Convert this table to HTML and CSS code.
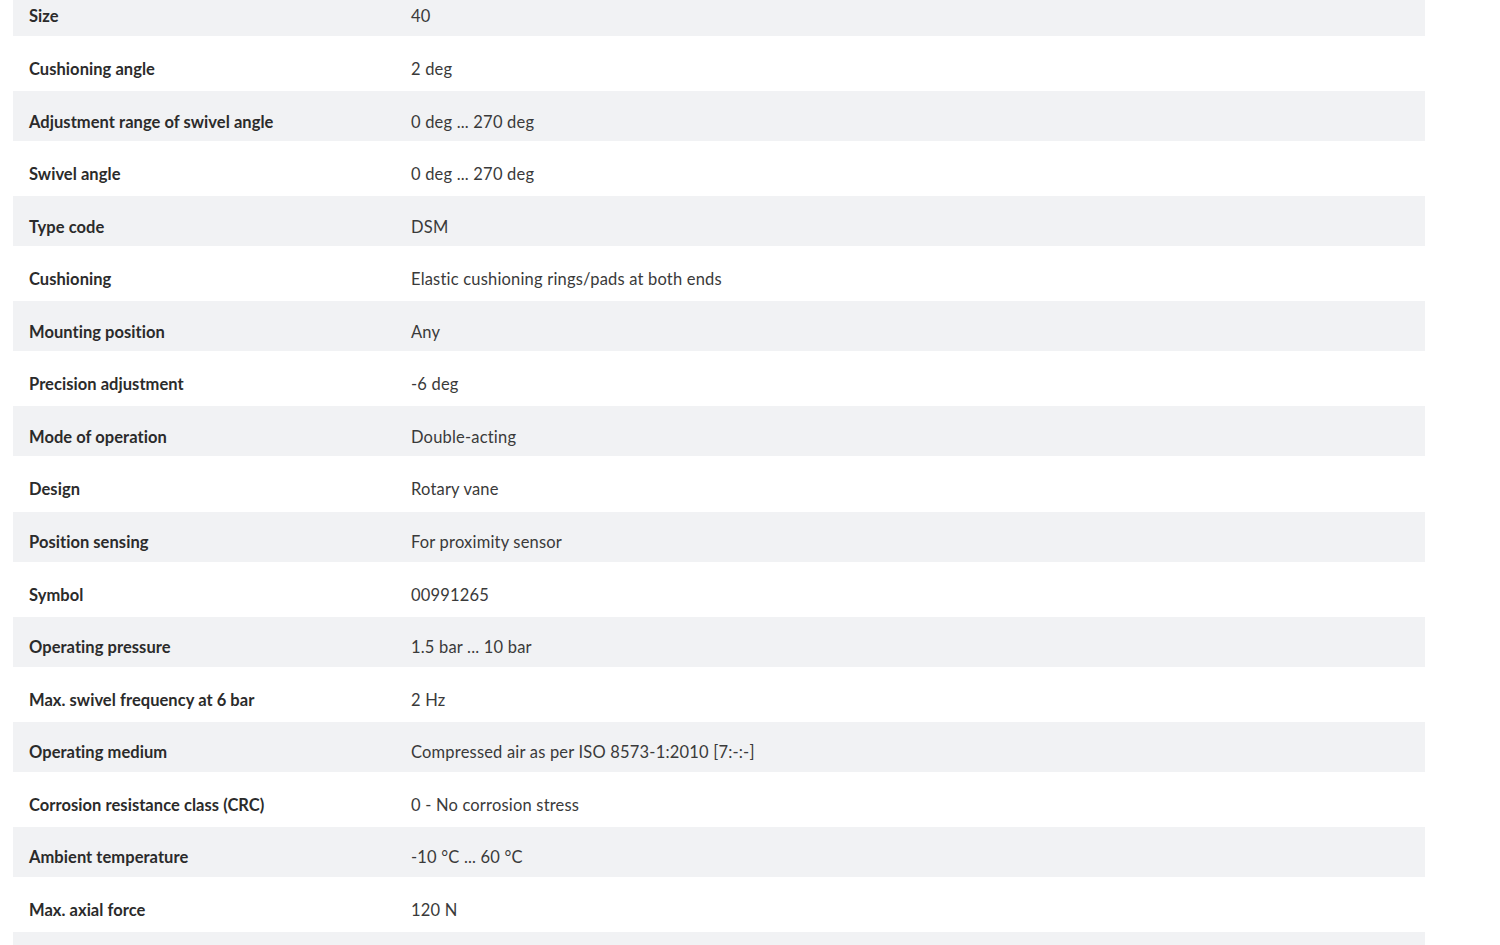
FILE: index.html
```html
<!DOCTYPE html>
<html lang="en">
<head>
<meta charset="utf-8">
<title>Technical data</title>
<link rel="stylesheet" href="styles.css">
</head>
<body>
<div class="specs">
<table class="spec-table">
<tbody>
<tr class="row alt"><th>Size</th><td>40</td></tr>
<tr class="row"><th>Cushioning angle</th><td>2 deg</td></tr>
<tr class="row alt"><th>Adjustment range of swivel angle</th><td>0 deg ... 270 deg</td></tr>
<tr class="row"><th>Swivel angle</th><td>0 deg ... 270 deg</td></tr>
<tr class="row alt"><th>Type code</th><td>DSM</td></tr>
<tr class="row"><th>Cushioning</th><td>Elastic cushioning rings/pads at both ends</td></tr>
<tr class="row alt"><th>Mounting position</th><td>Any</td></tr>
<tr class="row"><th>Precision adjustment</th><td>-6 deg</td></tr>
<tr class="row alt"><th>Mode of operation</th><td>Double-acting</td></tr>
<tr class="row"><th>Design</th><td>Rotary vane</td></tr>
<tr class="row alt"><th>Position sensing</th><td>For proximity sensor</td></tr>
<tr class="row"><th>Symbol</th><td>00991265</td></tr>
<tr class="row alt"><th>Operating pressure</th><td>1.5 bar ... 10 bar</td></tr>
<tr class="row"><th>Max. swivel frequency at 6 bar</th><td>2 Hz</td></tr>
<tr class="row alt"><th>Operating medium</th><td>Compressed air as per ISO 8573-1:2010 [7:-:-]</td></tr>
<tr class="row"><th>Corrosion resistance class (CRC)</th><td>0 - No corrosion stress</td></tr>
<tr class="row alt"><th>Ambient temperature</th><td>-10 °C ... 60 °C</td></tr>
<tr class="row"><th>Max. axial force</th><td>120 N</td></tr>
<tr class="row alt"><th></th><td></td></tr>
</tbody>
</table>
</div>
</body>
</html>
```
FILE: styles.css
```css
html, body {
  margin: 0;
  padding: 0;
  background: #ffffff;
}
body {
  font-family: Lato, "Liberation Sans", sans-serif;
  color: #333333;
  overflow: hidden;
}
.specs {
  margin: -14.14px 0 0 13px;
  width: 1412px;
}
.spec-table {
  width: 100%;
  border-collapse: collapse;
  table-layout: fixed;
}
.spec-table th,
.spec-table td {
  text-align: left;
  vertical-align: middle;
  padding: 11px 16px 0;
  font-size: 16.5px;
  line-height: 20px;
}
.spec-table th {
  width: 350px;
  font-weight: 700;
  letter-spacing: 0.05px;
  color: #2b2b2b;
}
.spec-table td {
  font-weight: 400;
  letter-spacing: 0.19px;
  color: #3a3a3a;
}
.row {
  height: 55.04px;
}
.row.alt {
  height: 50.1px;
  background: #f1f2f4;
}
```
